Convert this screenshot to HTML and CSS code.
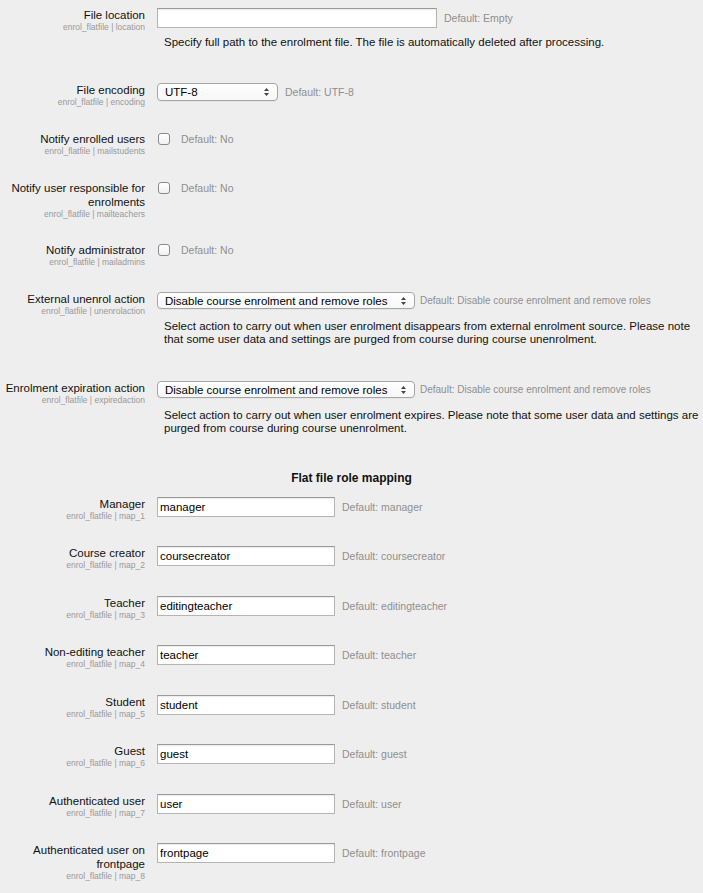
FILE: index.html
```html
<!DOCTYPE html>
<html>
<head>
<meta charset="utf-8">
<link rel="stylesheet" href="styles.css">
</head>
<body>
<div class="page">

  <div class="row">
    <div class="lbl"><div class="name">File location</div><div class="sub">enrol_flatfile | location</div></div>
    <div class="ctl">
      <div class="line"><input class="text wide" type="text" value=""><span class="def">Default: Empty</span></div>
    </div>
    <div class="desc short">Specify full path to the enrolment file. The file is automatically deleted after processing.</div>
  </div>

  <div class="row">
    <div class="lbl"><div class="name">File encoding</div><div class="sub">enrol_flatfile | encoding</div></div>
    <div class="ctl">
      <div class="line selline"><span class="sel sel-sm"><span class="seltext">UTF-8</span><svg class="arrows" width="7" height="10" viewBox="0 0 7 10"><path d="M3.5 1 L6 4 L1 4 Z M3.5 9 L6 6 L1 6 Z" fill="#444"/></svg></span><span class="def">Default: UTF-8</span></div>
    </div>
  </div>

  <div class="row cbrow">
    <div class="lbl"><div class="name">Notify enrolled users</div><div class="sub">enrol_flatfile | mailstudents</div></div>
    <div class="ctl">
      <div class="line cbline"><span class="cb"></span><span class="def cbdef">Default: No</span></div>
    </div>
  </div>

  <div class="row cbrow">
    <div class="lbl"><div class="name">Notify user responsible for enrolments</div><div class="sub">enrol_flatfile | mailteachers</div></div>
    <div class="ctl">
      <div class="line cbline"><span class="cb"></span><span class="def cbdef">Default: No</span></div>
    </div>
  </div>

  <div class="row cbrow">
    <div class="lbl"><div class="name">Notify administrator</div><div class="sub">enrol_flatfile | mailadmins</div></div>
    <div class="ctl">
      <div class="line cbline"><span class="cb"></span><span class="def cbdef">Default: No</span></div>
    </div>
  </div>

  <div class="row">
    <div class="lbl"><div class="name">External unenrol action</div><div class="sub">enrol_flatfile | unenrolaction</div></div>
    <div class="ctl">
      <div class="line selline"><span class="sel sel-lg"><span class="seltext">Disable course enrolment and remove roles</span><svg class="arrows" width="7" height="10" viewBox="0 0 7 10"><path d="M3.5 1 L6 4 L1 4 Z M3.5 9 L6 6 L1 6 Z" fill="#444"/></svg></span><span class="def seldef">Default: Disable course enrolment and remove roles</span></div>
    </div>
    <div class="desc">Select action to carry out when user enrolment disappears from external enrolment source. Please note that some user data and settings are purged from course during course unenrolment.</div>
  </div>

  <div class="row">
    <div class="lbl"><div class="name">Enrolment expiration action</div><div class="sub">enrol_flatfile | expiredaction</div></div>
    <div class="ctl">
      <div class="line selline"><span class="sel sel-lg"><span class="seltext">Disable course enrolment and remove roles</span><svg class="arrows" width="7" height="10" viewBox="0 0 7 10"><path d="M3.5 1 L6 4 L1 4 Z M3.5 9 L6 6 L1 6 Z" fill="#444"/></svg></span><span class="def seldef">Default: Disable course enrolment and remove roles</span></div>
    </div>
    <div class="desc">Select action to carry out when user enrolment expires. Please note that some user data and settings are purged from course during course unenrolment.</div>
  </div>

  <h3 class="heading">Flat file role mapping</h3>

  <div class="row role">
    <div class="lbl"><div class="name">Manager</div><div class="sub">enrol_flatfile | map_1</div></div>
    <div class="ctl"><div class="line"><input class="text" type="text" value="manager"><span class="def">Default: manager</span></div></div>
  </div>

  <div class="row role">
    <div class="lbl"><div class="name">Course creator</div><div class="sub">enrol_flatfile | map_2</div></div>
    <div class="ctl"><div class="line"><input class="text" type="text" value="coursecreator"><span class="def">Default: coursecreator</span></div></div>
  </div>

  <div class="row role">
    <div class="lbl"><div class="name">Teacher</div><div class="sub">enrol_flatfile | map_3</div></div>
    <div class="ctl"><div class="line"><input class="text" type="text" value="editingteacher"><span class="def">Default: editingteacher</span></div></div>
  </div>

  <div class="row role">
    <div class="lbl"><div class="name">Non-editing teacher</div><div class="sub">enrol_flatfile | map_4</div></div>
    <div class="ctl"><div class="line"><input class="text" type="text" value="teacher"><span class="def">Default: teacher</span></div></div>
  </div>

  <div class="row role">
    <div class="lbl"><div class="name">Student</div><div class="sub">enrol_flatfile | map_5</div></div>
    <div class="ctl"><div class="line"><input class="text" type="text" value="student"><span class="def">Default: student</span></div></div>
  </div>

  <div class="row role">
    <div class="lbl"><div class="name">Guest</div><div class="sub">enrol_flatfile | map_6</div></div>
    <div class="ctl"><div class="line"><input class="text" type="text" value="guest"><span class="def">Default: guest</span></div></div>
  </div>

  <div class="row role">
    <div class="lbl"><div class="name">Authenticated user</div><div class="sub">enrol_flatfile | map_7</div></div>
    <div class="ctl"><div class="line"><input class="text" type="text" value="user"><span class="def">Default: user</span></div></div>
  </div>

  <div class="row role">
    <div class="lbl"><div class="name">Authenticated user on frontpage</div><div class="sub">enrol_flatfile | map_8</div></div>
    <div class="ctl"><div class="line"><input class="text" type="text" value="frontpage"><span class="def">Default: frontpage</span></div></div>
  </div>

</div>
</body>
</html>
```

FILE: styles.css
```css
html, body {
  margin: 0;
  padding: 0;
  background: #eeeeee;
}
body {
  font-family: "Liberation Sans", Arial, Helvetica, sans-serif;
  color: #1a1a1a;
  font-size: 11.5px;
}
.page {
  padding-top: 8px;
  width: 703px;
}
.row {
  display: grid;
  grid-template-columns: 145px 1fr;
  column-gap: 12px;
  margin-bottom: 24px;
}
.row.cbrow {
  margin-bottom: 23.5px;
}
.row.role {
  margin-bottom: 24.5px;
}
.lbl {
  text-align: right;
}
.name {
  font-size: 11.5px;
  line-height: 14px;
  color: #111;
}
.sub {
  font-size: 8.5px;
  line-height: 11px;
  color: #999;
}
.ctl {
  min-width: 0;
}
.line {
  display: flex;
  align-items: center;
  min-height: 20px;
}
.line.selline {
  min-height: 18px;
}
.line.cbline {
  min-height: 14px;
  height: 14px;
}
.text {
  box-sizing: border-box;
  width: 178px;
  height: 20px;
  margin: 0;
  padding: 0 2px;
  border: 1px solid #b4b4b4;
  border-top-color: #9a9a9a;
  background: #fff;
  box-shadow: inset 0 1px 1px rgba(0,0,0,0.08);
  font-family: "Liberation Sans", Arial, sans-serif;
  font-size: 11.5px;
  color: #000;
  outline: none;
}
.text.wide {
  width: 280px;
}
.def {
  margin-left: 7px;
  font-size: 10.5px;
  color: #8f8f8f;
  white-space: nowrap;
}
.seldef {
  margin-left: 5px;
  font-size: 10px;
}
.cbdef {
  margin-left: 11px;
}
.sel {
  position: relative;
  box-sizing: border-box;
  display: inline-flex;
  align-items: center;
  height: 18px;
  border: 1px solid #a6a6a6;
  border-radius: 4px;
  background: linear-gradient(#ffffff, #f7f7f7);
  box-shadow: 0 1px 0 rgba(0,0,0,0.04);
  padding-left: 7px;
  font-size: 11.5px;
  color: #000;
}
.sel-sm {
  width: 121px;
}
.sel-lg {
  width: 258px;
  height: 17px;
}
.seltext {
  white-space: nowrap;
}
.arrows {
  position: absolute;
  right: 7px;
  top: 50%;
  margin-top: -5px;
}
.cb {
  box-sizing: border-box;
  display: inline-block;
  width: 12px;
  height: 12px;
  margin-left: 1px;
  border: 1px solid #8a8a8a;
  border-radius: 3px;
  background: linear-gradient(#ffffff, #f1f1f1);
}
.desc {
  grid-column: 2;
  margin: 3px 0 11px 7px;
  font-size: 11.5px;
  line-height: 13px;
  color: #111;
}
.desc.short {
  margin-bottom: 10px;
}
.heading {
  margin: 0 0 11px 0;
  text-align: center;
  font-size: 12px;
  line-height: 16px;
  font-weight: bold;
  color: #111;
}
```
